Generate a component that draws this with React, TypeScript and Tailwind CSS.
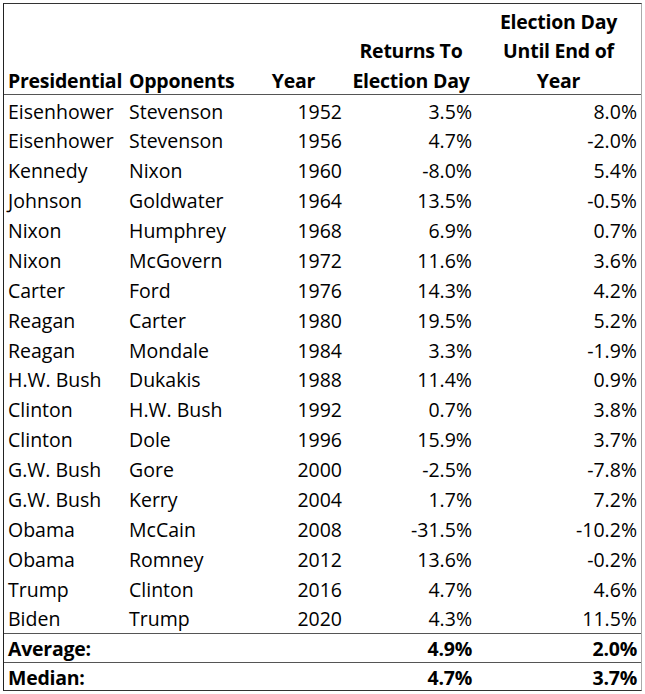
import React from "react";

const rows: [string, string, string, string, string][] = [
  ["Eisenhower", "Stevenson", "1952", "3.5%", "8.0%"],
  ["Eisenhower", "Stevenson", "1956", "4.7%", "-2.0%"],
  ["Kennedy", "Nixon", "1960", "-8.0%", "5.4%"],
  ["Johnson", "Goldwater", "1964", "13.5%", "-0.5%"],
  ["Nixon", "Humphrey", "1968", "6.9%", "0.7%"],
  ["Nixon", "McGovern", "1972", "11.6%", "3.6%"],
  ["Carter", "Ford", "1976", "14.3%", "4.2%"],
  ["Reagan", "Carter", "1980", "19.5%", "5.2%"],
  ["Reagan", "Mondale", "1984", "3.3%", "-1.9%"],
  ["H.W. Bush", "Dukakis", "1988", "11.4%", "0.9%"],
  ["Clinton", "H.W. Bush", "1992", "0.7%", "3.8%"],
  ["Clinton", "Dole", "1996", "15.9%", "3.7%"],
  ["G.W. Bush", "Gore", "2000", "-2.5%", "-7.8%"],
  ["G.W. Bush", "Kerry", "2004", "1.7%", "7.2%"],
  ["Obama", "McCain", "2008", "-31.5%", "-10.2%"],
  ["Obama", "Romney", "2012", "13.6%", "-0.2%"],
  ["Trump", "Clinton", "2016", "4.7%", "4.6%"],
  ["Biden", "Trump", "2020", "4.3%", "11.5%"],
];

const grid = "grid grid-cols-[121px_116px_105px_130px_165px]";

export default function App() {
  return (
    <div
      className="w-[645px] h-[694px] bg-white pl-[3px] pt-[3px] text-black text-[19.5px]"
      style={{ fontFamily: '"Open Sans", "Liberation Sans", sans-serif' }}
    >
      <div className="w-[639px] border-l border-t border-l-[#222] border-t-[#333] border-r border-r-[#aaa] border-b border-b-[#333]">
        <div className={`${grid} h-[91px] font-bold leading-[29.5px] tracking-[-0.25px] border-b border-[#555]`}>
          <div className="self-end pl-[4px] -mb-[1px] whitespace-nowrap">Presidential</div>
          <div className="self-end pl-[4px] -mb-[1px] whitespace-nowrap">Opponents</div>
          <div className="self-end text-center -mb-[1px]">Year</div>
          <div className="self-end text-center -mb-[1px] whitespace-nowrap">
            Returns To
            <br />
            Election Day
          </div>
          <div className="self-end text-center -mb-[1px] whitespace-nowrap">
            Election Day
            <br />
            Until End of
            <br />
            Year
          </div>
        </div>
        {rows.map((r, i) => (
          <div key={i} className={`${grid} h-[29.875px] items-center pt-[1.5px]`}>
            <div className="pl-[4px] whitespace-nowrap">{r[0]}</div>
            <div className="pl-[4px] whitespace-nowrap">{r[1]}</div>
            <div className="text-right pr-[4px]">{r[2]}</div>
            <div className="text-right pr-[4px]">{r[3]}</div>
            <div className="text-right pr-[4px]">{r[4]}</div>
          </div>
        ))}
        <div className={`${grid} h-[29px] items-center font-bold tracking-[-0.25px] border-t border-[#555]`}>
          <div className="pl-[4px]">Average:</div>
          <div />
          <div />
          <div className="text-right pr-[4px]">4.9%</div>
          <div className="text-right pr-[4px]">2.0%</div>
        </div>
        <div className={`${grid} h-[28px] items-center font-bold tracking-[-0.25px] border-t border-[#555]`}>
          <div className="pl-[4px]">Median:</div>
          <div />
          <div />
          <div className="text-right pr-[4px]">4.7%</div>
          <div className="text-right pr-[4px]">3.7%</div>
        </div>
      </div>
    </div>
  );
}
